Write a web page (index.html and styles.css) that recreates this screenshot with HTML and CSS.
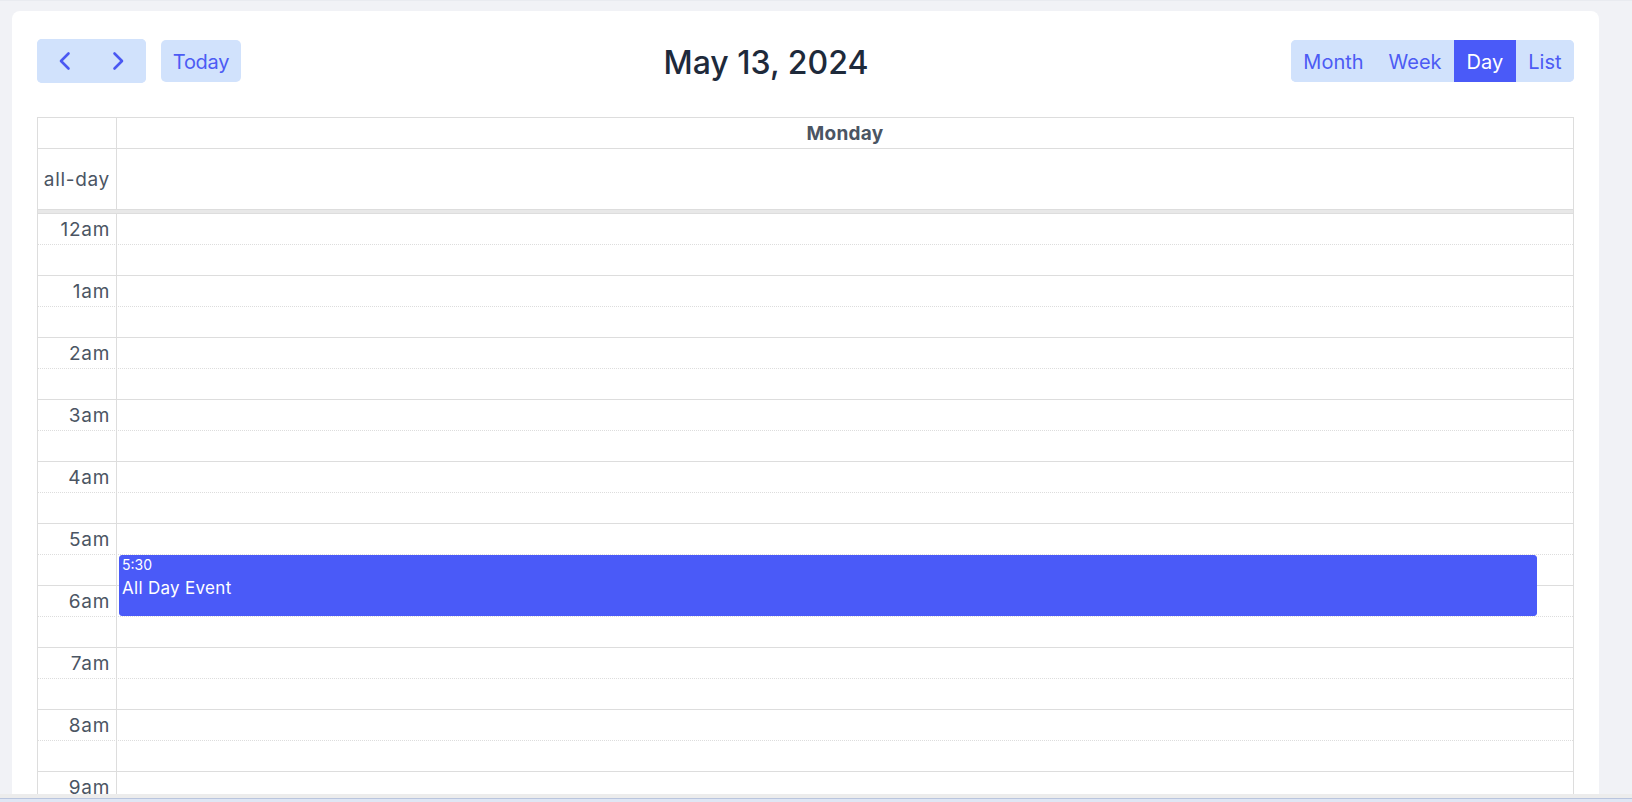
FILE: index.html
```html
<!DOCTYPE html>
<html>
<head>
<meta charset="utf-8">
<link rel="stylesheet" href="styles.css">
</head>
<body>
<div class="page">
  <div class="card">
    <div class="toolbar">
      <div class="chunk left">
        <div class="btn-group nav">
          <button class="btn icon" aria-label="prev"><svg width="14" height="20" viewBox="0 0 14 20"><polyline points="11.5,2.5 4,10 11.5,17.5" fill="none" stroke="currentColor" stroke-width="2.6" stroke-linecap="round" stroke-linejoin="round"/></svg></button>
          <button class="btn icon" aria-label="next"><svg width="14" height="20" viewBox="0 0 14 20"><polyline points="2.5,2.5 10,10 2.5,17.5" fill="none" stroke="currentColor" stroke-width="2.6" stroke-linecap="round" stroke-linejoin="round"/></svg></button>
        </div>
        <button class="btn today">Today</button>
      </div>
      <h2 class="title">May 13, 2024</h2>
      <div class="btn-group views">
        <button class="btn">Month</button>
        <button class="btn">Week</button>
        <button class="btn active">Day</button>
        <button class="btn">List</button>
      </div>
    </div>

    <div class="cal">
      <div class="row head">
        <div class="axis"></div>
        <div class="lane dayname">Monday</div>
      </div>
      <div class="row allday">
        <div class="axis">all-day</div>
        <div class="lane"></div>
      </div>
      <div class="divider"></div>
      <div class="slots">
        <div class="row slot minor"><div class="axis">12am</div><div class="lane"></div></div>
        <div class="row slot"><div class="axis"></div><div class="lane"></div></div>
        <div class="row slot minor"><div class="axis">1am</div><div class="lane"></div></div>
        <div class="row slot"><div class="axis"></div><div class="lane"></div></div>
        <div class="row slot minor"><div class="axis">2am</div><div class="lane"></div></div>
        <div class="row slot"><div class="axis"></div><div class="lane"></div></div>
        <div class="row slot minor"><div class="axis">3am</div><div class="lane"></div></div>
        <div class="row slot"><div class="axis"></div><div class="lane"></div></div>
        <div class="row slot minor"><div class="axis">4am</div><div class="lane"></div></div>
        <div class="row slot"><div class="axis"></div><div class="lane"></div></div>
        <div class="row slot minor"><div class="axis">5am</div><div class="lane"></div></div>
        <div class="row slot"><div class="axis"></div><div class="lane"></div></div>
        <div class="row slot minor"><div class="axis">6am</div><div class="lane"></div></div>
        <div class="row slot"><div class="axis"></div><div class="lane"></div></div>
        <div class="row slot minor"><div class="axis">7am</div><div class="lane"></div></div>
        <div class="row slot"><div class="axis"></div><div class="lane"></div></div>
        <div class="row slot minor"><div class="axis">8am</div><div class="lane"></div></div>
        <div class="row slot"><div class="axis"></div><div class="lane"></div></div>
        <div class="row slot minor"><div class="axis">9am</div><div class="lane"></div></div>
        <div class="row slot"><div class="axis"></div><div class="lane"></div></div>
        <div class="row slot minor"><div class="axis">10am</div><div class="lane"></div></div>
        <div class="row slot"><div class="axis"></div><div class="lane"></div></div>

        <div class="event">
          <div class="ev-time">5:30</div>
          <div class="ev-title">All Day Event</div>
        </div>
      </div>
    </div>
  </div>
</div>
<div class="strip-gray"></div>
<div class="strip-blue"></div>
</body>
</html>
```

FILE: styles.css
```css
* { box-sizing: border-box; }

html, body {
  margin: 0;
  padding: 0;
  background: #f1f2f6;
  font-family: Inter, "Noto Sans", sans-serif;
  overflow: hidden;
}

.page {
  height: 794px;
  overflow: hidden;
  padding: 10px 0 0 12px;
  border-top: 1px solid #e9ebf0;
}

.card {
  width: 1587px;
  background: #ffffff;
  border-radius: 8px 8px 0 0;
  padding: 28px 25px 0 25px;
  min-height: 900px;
}

.toolbar {
  display: flex;
  justify-content: space-between;
  align-items: center;
  height: 44px;
  margin-bottom: 34px;
}

.chunk.left {
  display: flex;
  align-items: center;
  gap: 15px;
}

.btn {
  font-family: Inter, "Noto Sans", sans-serif;
  font-size: 20px;
  font-weight: 400;
  color: #4c5bf4;
  background: #d1e2fc;
  border: 0;
  padding: 3px 12.5px 0 12.5px;
  height: 42px;
  line-height: 39px;
  margin: 0;
  cursor: pointer;
}

.btn-group {
  display: flex;
  border-radius: 5px;
  overflow: hidden;
  background: #d1e2fc;
}

.btn-group.nav {
  height: 44px;
}

.btn-group.nav .btn.icon {
  width: 54.5px;
  height: 44px;
  padding: 0;
  display: flex;
  align-items: center;
  justify-content: center;
  color: #4a58f2;
}

.btn.today {
  border-radius: 5px;
  width: 80px;
  padding-left: 0;
  padding-right: 0;
  letter-spacing: -0.3px;
}

.btn.active {
  background: #4a5af8;
  color: #ffffff;
}

.title {
  margin: 0;
  padding-top: 4px;
  font-size: 32px;
  font-weight: 500;
  color: #1e2a3b;
  line-height: 44px;
}

.cal {
  border: 1px solid #dddddd;
  border-bottom: 0;
  width: 1537px;
}

.row {
  display: flex;
}

.axis {
  width: 79px;
  flex: none;
  border-right: 1px solid #dddddd;
  text-align: right;
  padding-right: 6px;
  color: #4b5563;
  font-size: 19px;
  letter-spacing: 0.7px;
  white-space: nowrap;
}

.lane {
  flex: 1;
}

.head {
  height: 31px;
  border-bottom: 1px solid #dddddd;
}

.dayname {
  text-align: center;
  font-weight: 700;
  font-size: 19px;
  letter-spacing: 0.3px;
  color: #4b5563;
  padding-top: 2px;
  line-height: 28px;
}

.allday {
  height: 60px;
}

.allday .axis {
  padding-top: 1px;
  line-height: 59px;
}

.divider {
  height: 5px;
  background: #e8e8e8;
  border-top: 1px solid #dddddd;
  border-bottom: 1px solid #dddddd;
}

.slots {
  position: relative;
}

.slot {
  height: 31px;
  border-bottom: 1px solid #dddddd;
}

.slot.minor {
  border-bottom: 1px dotted #dddddd;
}

.slot .axis {
  padding-top: 2px;
  line-height: 28px;
}

.event {
  position: absolute;
  top: 341px;
  left: 81px;
  right: 36px;
  height: 61px;
  background: #4a5af8;
  border: 1px solid #4a5af8;
  border-radius: 3px;
  color: #ffffff;
  padding: 0 2px;
}

.ev-time {
  font-size: 14px;
  line-height: 18px;
}

.ev-title {
  font-size: 17px;
  line-height: 28px;
  letter-spacing: 0.3px;
}

.strip-gray {
  height: 4px;
  background: #ececec;
}

.strip-blue {
  height: 4px;
  background: #dfe6f4;
  border-top: 1px solid #b9c5de;
}
```
